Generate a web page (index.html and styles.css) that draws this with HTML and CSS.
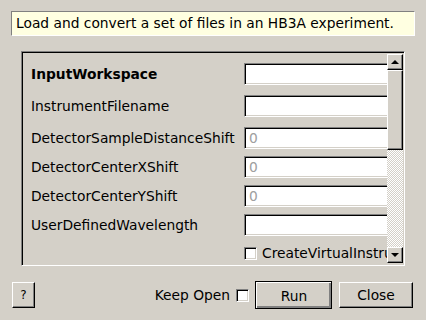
FILE: index.html
```html
<!DOCTYPE html>
<html lang="en">
<head>
  <meta charset="UTF-8" />
  <title>LoadHB3A input dialog</title>
  <link rel="stylesheet" href="styles.css">
</head>
<body>
  <div class="dialog">
    <div class="description">Load and convert a set of files in an HB3A experiment.</div>

    <div class="prop-frame">
      <div class="prop-list">
        <div class="prop-row tall">
          <span class="prop-name bold">InputWorkspace</span>
          <span class="field"></span>
        </div>
        <div class="prop-row tall">
          <span class="prop-name">InstrumentFilename</span>
          <span class="field"></span>
        </div>
        <div class="prop-row">
          <span class="prop-name">DetectorSampleDistanceShift</span>
          <span class="field placeholder">0</span>
        </div>
        <div class="prop-row">
          <span class="prop-name">DetectorCenterXShift</span>
          <span class="field placeholder">0</span>
        </div>
        <div class="prop-row">
          <span class="prop-name">DetectorCenterYShift</span>
          <span class="field placeholder">0</span>
        </div>
        <div class="prop-row">
          <span class="prop-name">UserDefinedWavelength</span>
          <span class="field"></span>
        </div>
        <div class="prop-row check-row">
          <span class="prop-name"></span>
          <span class="checkbox"></span>
          <span class="check-text">CreateVirtualInstrument</span>
        </div>
      </div>

      <!-- scrollbar -->
      <div class="scrollbar">
        <div class="sb-btn"><span class="arrow up"></span></div>
        <div class="sb-thumb"></div>
        <div class="sb-track"></div>
        <div class="sb-btn"><span class="arrow down"></span></div>
      </div>
    </div>

    <div class="button-bar">
      <button class="btn help">?</button>
      <span class="spacer"></span>
      <span class="keep-open">Keep Open</span>
      <span class="checkbox"></span>
      <button class="btn run">Run</button>
      <button class="btn close">Close</button>
    </div>
  </div>
</body>
</html>
```

FILE: styles.css
```css
* {
  margin: 0;
  padding: 0;
  box-sizing: border-box;
}
body {
  font-family: "DejaVu Sans", Verdana, sans-serif;
  font-size: 13.8px;
  color: #000;
  background-color: #d4d0c8;
}

.dialog {
  width: 426px;
  height: 320px;
  padding: 11px 11px 0 11px;
}

/* caixa de descricao */
.description {
  height: 25px;
  line-height: 23px;
  padding-left: 4px;
  background-color: #ffffe1;
  border: 1px solid;
  border-color: #808080 #fff #fff #808080;
  white-space: nowrap;
}

/* moldura com as propriedades */
.prop-frame {
  display: flex;
  margin: 15px 10px 0 10px;
  height: 215px;
  border: 1px solid;
  border-color: #808080 #fff #fff #808080;
  box-shadow: inset 1px 1px #000, inset -1px -1px #d4d0c8;
  padding: 2px 1px 2px 2px;
}
.prop-list {
  flex: 1;
  overflow: hidden;
  padding-top: 9px;
  display: flex;
  flex-direction: column;
  gap: 7px;
}
.prop-row {
  display: flex;
  align-items: center;
  height: 22px;
  padding-left: 7px;
  white-space: nowrap;
}
.prop-row.tall {
  margin-bottom: 3px;
}
.prop-name {
  width: 213px;
  flex-shrink: 0;
}
.bold {
  font-weight: bold;
}
.field {
  width: 170px;
  height: 22px;
  flex-shrink: 0;
  background-color: #fff;
  border: 1px solid;
  border-color: #808080 #fff #fff #808080;
  box-shadow: inset 1px 1px #000, inset -1px -1px #d4d0c8;
  padding-left: 4px;
  line-height: 20px;
}
.placeholder {
  color: #a0a0a0;
}
.check-row {
  height: 14px;
  margin-top: 3px;
}
.checkbox {
  display: inline-block;
  width: 13px;
  height: 13px;
  flex-shrink: 0;
  background-color: #fff;
  border: 1px solid;
  border-color: #808080 #fff #fff #808080;
  box-shadow: inset 1px 1px #000, inset -1px -1px #d4d0c8;
}
.check-text {
  margin-left: 5px;
}

/* barra de rolagem */
.scrollbar {
  width: 16px;
  flex-shrink: 0;
  display: flex;
  flex-direction: column;
}
.sb-btn,
.sb-thumb {
  background-color: #d4d0c8;
  border: 1px solid;
  border-color: #fff #000 #000 #fff;
  box-shadow: inset -1px -1px #808080;
}
.sb-btn {
  height: 16px;
  display: flex;
  align-items: center;
  justify-content: center;
}
.sb-thumb {
  height: 80px;
}
.sb-track {
  flex: 1;
  background-color: #d4d0c8;
  background-image: conic-gradient(#fff 25%, #d4d0c8 0 50%, #fff 0 75%, #d4d0c8 0);
  background-size: 2px 2px;
}
.arrow {
  width: 0;
  height: 0;
  border-left: 4px solid transparent;
  border-right: 4px solid transparent;
}
.arrow.up {
  border-bottom: 4px solid #000;
  margin-top: -1px;
}
.arrow.down {
  border-top: 4px solid #000;
}

/* botoes de baixo */
.button-bar {
  display: flex;
  align-items: center;
  height: 28px;
  margin-top: 15px;
  padding: 0 2px 0 1px;
}
.spacer {
  flex: 1;
}
.btn {
  font-family: inherit;
  font-size: 13.8px;
  color: #000;
  background-color: #d4d0c8;
  border: 1px solid;
  border-color: #fff #000 #000 #fff;
  box-shadow: inset -1px -1px #808080;
  height: 26px;
}
.help {
  width: 23px;
  font-size: 12px;
}
.keep-open {
  margin-right: 6px;
}
.run {
  width: 77px;
  height: 28px;
  margin-left: 6px;
  outline: 1px solid #000;
  outline-offset: -1px;
  border-width: 2px 1px 1px 2px;
  box-shadow: inset -2px -2px #808080, inset -1px -1px #000;
}
.close {
  width: 74px;
  margin-left: 7px;
}
```
